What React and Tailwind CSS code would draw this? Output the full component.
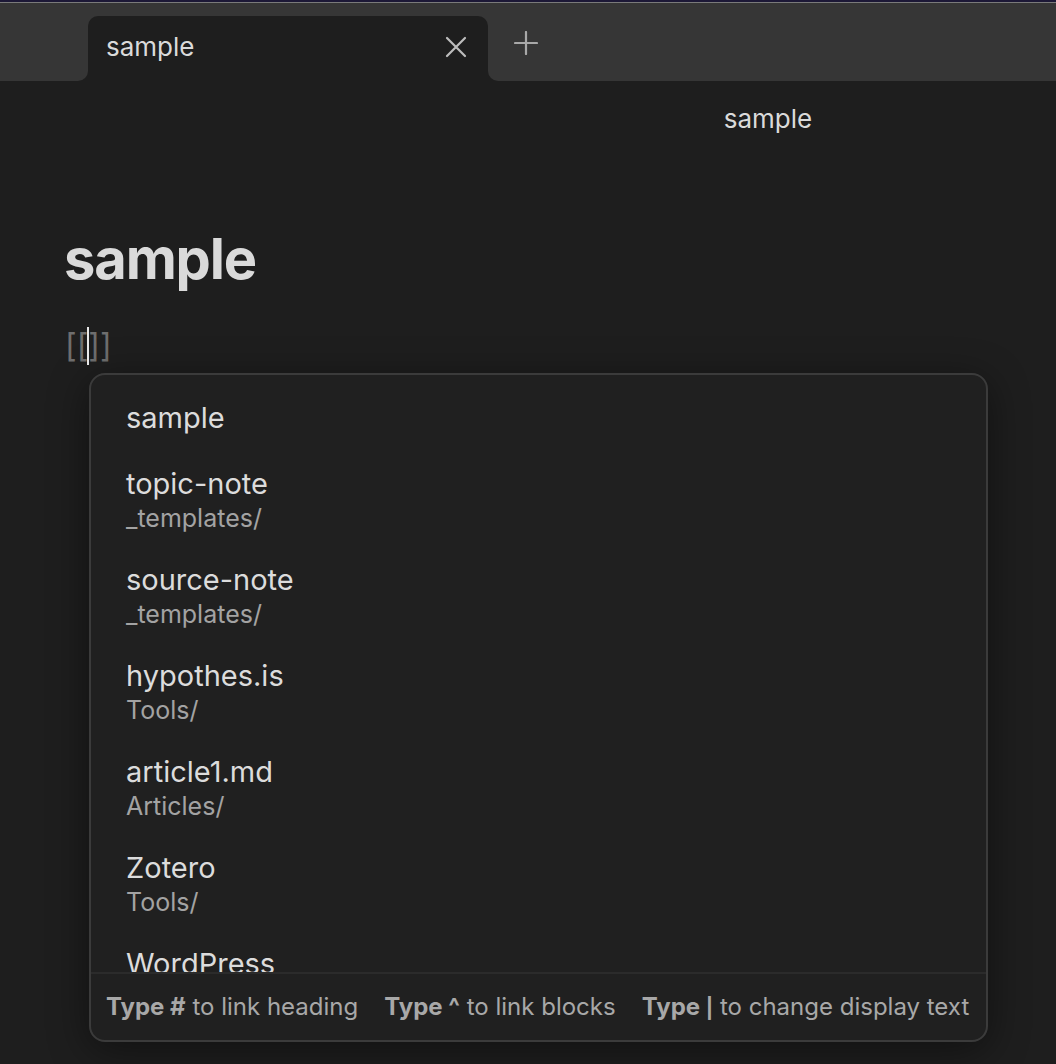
import React from "react";

const items = [
  { t: "sample" },
  { t: "topic-note", s: "_templates/" },
  { t: "source-note", s: "_templates/" },
  { t: "hypothes.is", s: "Tools/" },
  { t: "article1.md", s: "Articles/" },
  { t: "Zotero", s: "Tools/" },
  { t: "WordPress", s: "Tools/" },
  { t: "Hypothesis", s: "Tools/" },
];

export default function App() {
  return (
    <div
      className="w-[1056px] h-[1064px] bg-[#1e1e1e] overflow-hidden flex flex-col"
      style={{ fontFamily: "Inter, 'Noto Sans', sans-serif" }}
    >
      <div className="h-[2px] bg-[#1c1836]" />
      <div className="h-px bg-[#7a7a7a]" />
      {/* tab bar */}
      <div className="h-[78px] flex bg-[#1e1e1e] shrink-0">
        <div className="w-[88px] bg-[#363636] rounded-br-[10px]" />
        <div className="w-[400px] bg-[#363636] flex flex-col pt-[13px]">
          <div className="flex-1 bg-[#1e1e1e] rounded-t-[10px] flex items-start pl-[18px] pr-[21px] pt-[15px]">
            <span className="text-[26px] leading-[32px] text-[#dadada] flex-1">sample</span>
            <svg width="22" height="22" viewBox="0 0 22 22" className="mt-[5px]">
              <path d="M2 2 L20 20 M20 2 L2 20" stroke="#bdbdbd" strokeWidth="2.2" strokeLinecap="round" />
            </svg>
          </div>
        </div>
        <div className="flex-1 bg-[#363636] rounded-bl-[10px] pl-[26px] pt-[28px]">
          <svg width="24" height="24" viewBox="0 0 24 24">
            <path d="M12 1 V23 M1 12 H23" stroke="#a8a8a8" strokeWidth="2.2" strokeLinecap="round" />
          </svg>
        </div>
      </div>
      {/* view header */}
      <div className="h-[76px] flex items-center justify-center pl-[480px] shrink-0">
        <span className="text-[26px] leading-[32px] text-[#dadada]">sample</span>
      </div>
      {/* editor */}
      <div className="pl-[64px] pt-[70px]">
        <h1 className="text-[56px] leading-[64px] font-bold tracking-[-0.02em] text-[#dadada]">sample</h1>
        <div className="mt-[35px] h-[40px] flex items-center text-[32px] leading-[40px] text-[#6e6e6e] pl-[1px]">
          <span>[[</span>
          <span className="w-[2px] h-[38px] bg-[#e8e8e8] -mx-[1px] relative z-10" />
          <span>]]</span>
        </div>
      </div>
      {/* suggestion popup */}
      <div className="ml-[89px] mt-[7px] w-[899px] h-[669px] bg-[#202020] border-2 border-[#3b3b3b] rounded-[16px] flex flex-col overflow-hidden shadow-[0_8px_40px_rgba(0,0,0,0.45)]">
        <div className="flex-1 overflow-hidden pt-[10px] px-[35px]">
          {items.map((it) => (
            <div key={it.t} className="py-[14px]">
              <div className="text-[29px] leading-[38px] text-[#dcdcdc]">{it.t}</div>
              {it.s && <div className="text-[25px] leading-[30px] text-[#a3a3a3]">{it.s}</div>}
            </div>
          ))}
        </div>
        <div className="h-[68px] shrink-0 border-t-2 border-[#2b2b2b] flex items-center px-[15px] gap-[26px] text-[24px] text-[#a8a8a8] whitespace-nowrap">
          <span><b className="font-bold">Type #</b> to link heading</span>
          <span><b className="font-bold">Type ^</b> to link blocks</span>
          <span><b className="font-bold">Type <span className="text-[20px]">|</span></b> to change display text</span>
        </div>
      </div>
    </div>
  );
}
